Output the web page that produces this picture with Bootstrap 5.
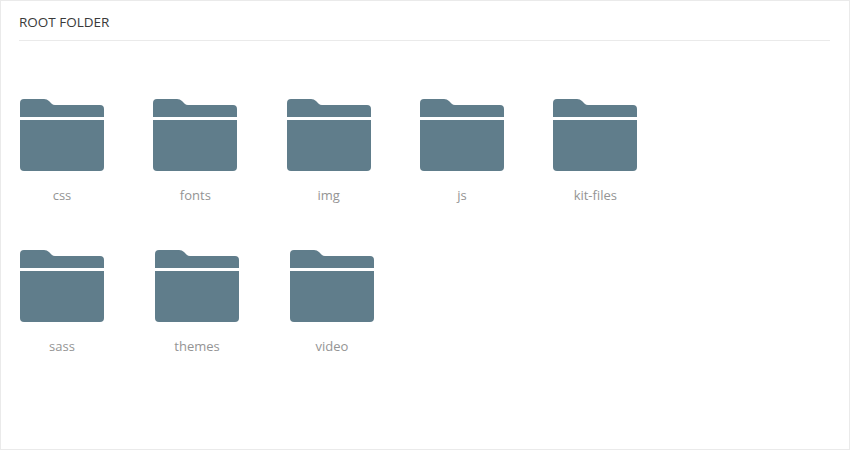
<!DOCTYPE html>
<html lang="en">
<head>
    <meta charset="UTF-8">
    <meta name="viewport" content="width=device-width, initial-scale=1.0">
    <title>Root folder</title>
    <link rel="stylesheet" href="https://cdn.jsdelivr.net/npm/bootstrap@5.3.2/dist/css/bootstrap.min.css">
    <style>
        body { font-family: "Open Sans", "Noto Sans", sans-serif; background: #fff; }
        .browser-panel { height: 450px; border: 1px solid #eaeaea; border-radius: 0; padding: 0 19px 0 18px; }
        .browser-head { height: 40px; border-bottom: 1px solid #eaeaea; font-size: 13.5px; line-height: 20px; padding-top: 11px; color: #3a3a3a; }
        .tile-grid { padding: 58px 0 0 1px; row-gap: 45px; }
        .tile-row-a { column-gap: 49.33px; }
        .tile-row-b { column-gap: 51px; }
        .tile-item { width: 84px; }
        .tile-item svg { display: block; width: 84px; height: 72px; }
        .tile-name { margin-top: 14px; height: 20px; line-height: 20px; font-size: 13px; color: #949494; text-align: center; white-space: nowrap; }
    </style>
</head>
<body>
    <svg width="0" height="0" class="position-absolute">
        <symbol id="folder-icon" viewBox="0 0 84 72">
            <path fill="#607d8b" d="M0 18V4Q0 0 4 0H24Q27 0 29 2L32 5Q33 6 35 6H80Q84 6 84 10V18Z"/>
            <path fill="#607d8b" d="M0 21H84V68Q84 72 80 72H4Q0 72 0 68Z"/>
        </symbol>
    </svg>

    <div class="card browser-panel">
        <div class="browser-head">ROOT FOLDER</div>
        <div class="tile-grid d-flex flex-column">
            <div class="tile-row-a d-flex">
                <div class="tile-item"><svg><use href="#folder-icon"/></svg><div class="tile-name">css</div></div>
                <div class="tile-item"><svg><use href="#folder-icon"/></svg><div class="tile-name">fonts</div></div>
                <div class="tile-item"><svg><use href="#folder-icon"/></svg><div class="tile-name">img</div></div>
                <div class="tile-item"><svg><use href="#folder-icon"/></svg><div class="tile-name">js</div></div>
                <div class="tile-item"><svg><use href="#folder-icon"/></svg><div class="tile-name">kit-files</div></div>
            </div>
            <div class="tile-row-b d-flex">
                <div class="tile-item"><svg><use href="#folder-icon"/></svg><div class="tile-name">sass</div></div>
                <div class="tile-item"><svg><use href="#folder-icon"/></svg><div class="tile-name">themes</div></div>
                <div class="tile-item"><svg><use href="#folder-icon"/></svg><div class="tile-name">video</div></div>
            </div>
        </div>
    </div>

    <script src="https://cdn.jsdelivr.net/npm/bootstrap@5.3.2/dist/js/bootstrap.bundle.min.js"></script>
</body>
</html>
